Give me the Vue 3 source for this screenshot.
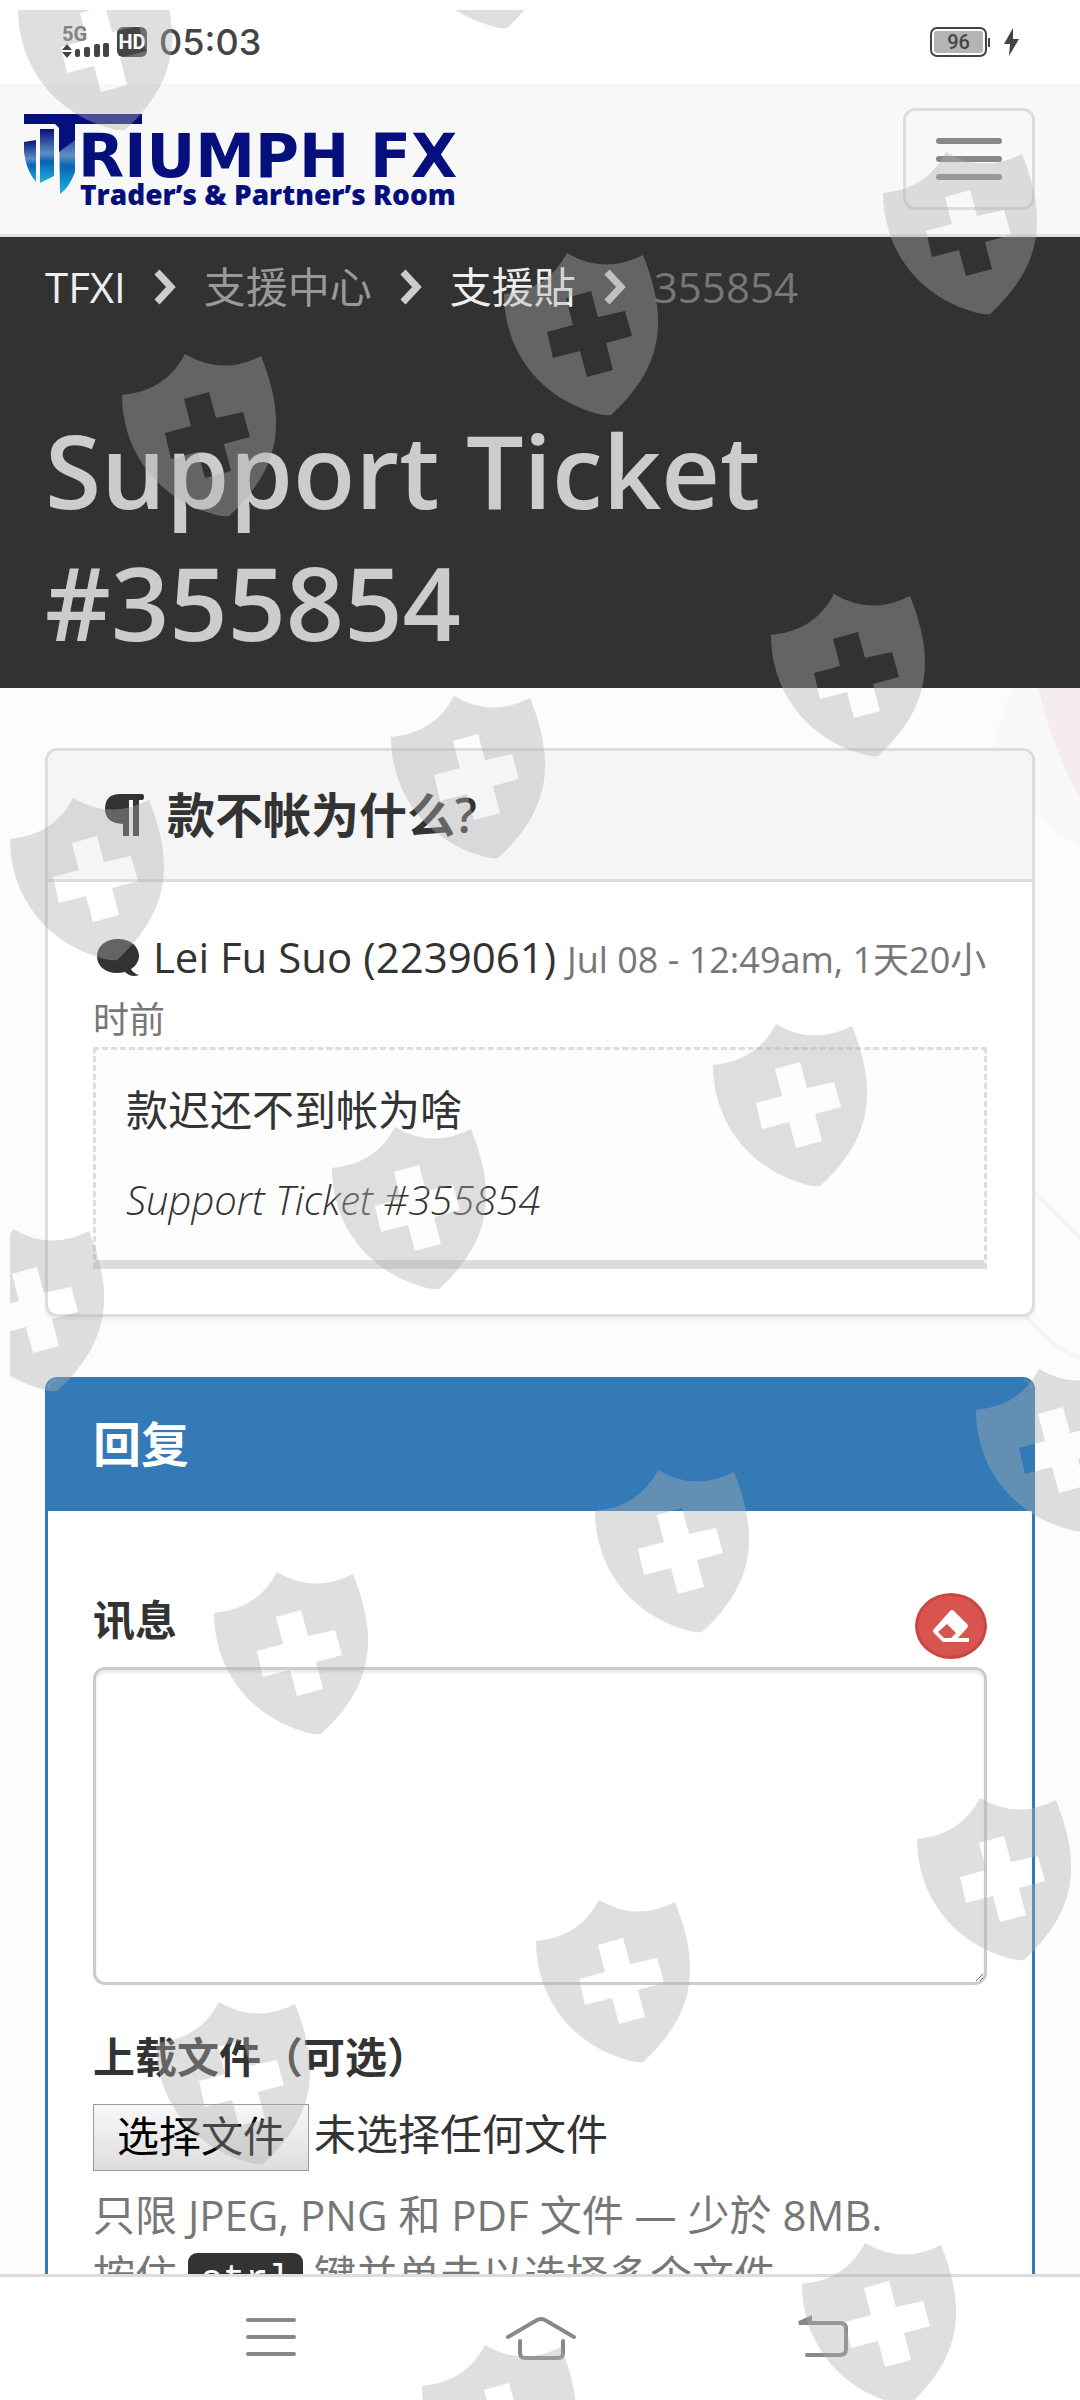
<script setup>
import { ref } from 'vue'

const ticket = {
  id: '355854',
  titulo: '款不帐为什么?',
  autor: 'Lei Fu Suo (2239061)',
  fecha: 'Jul 08 - 12:49am, 1天20小时前',
  mensaje: '款迟还不到帐为啥'
}

const migas = [
  { texto: 'TFXI', tipo: 'link' },
  { texto: '支援中心', tipo: 'muted' },
  { texto: '支援貼', tipo: 'link' },
  { texto: ticket.id, tipo: 'active' }
]

const escudos = [
  [400, -134], [18, -32],
  [883, 152], [504, 253], [122, 354],
  [771, 594], [391, 696], [10, 798],
  [713, 1024], [332, 1127], [-50, 1229],
  [976, 1369], [595, 1470], [214, 1572],
  [917, 1798], [536, 1900], [156, 2002],
  [802, 2243], [422, 2345]
]

const mensaje = ref('')
const archivos = ref([])
const inputArchivo = ref(null)

const limpiar = () => {
  mensaje.value = ''
}

const elegirArchivo = () => {
  inputArchivo.value.click()
}

const cambiarArchivo = (e) => {
  archivos.value = Array.from(e.target.files)
}
</script>

<template>
  <div class="phone">
    <div class="status-bar">
      <div class="status-left">
        <span class="signal">
          <span class="net">5G</span>
          <svg width="48" height="16" viewBox="0 0 48 16" fill="#444">
            <path d="M0 7 L5 1 L10 7z M0 9 L5 15 L10 9z" />
            <rect x="13" y="6" width="5" height="8" rx="2" />
            <rect x="22" y="4" width="6" height="10" rx="2" />
            <rect x="32" y="1" width="6" height="13" rx="2" />
            <rect x="41" y="0" width="6" height="14" rx="2" />
          </svg>
        </span>
        <span class="hd">HD</span>
        <span class="time">05:03</span>
      </div>
      <div class="status-right">
        <span class="battery"><span class="level">96</span></span>
        <svg width="16" height="28" viewBox="0 0 16 28" fill="#444">
          <path d="M9 0 L0 16 H6 L5 28 L15 11 H9z" />
        </svg>
      </div>
    </div>

    <nav class="navbar">
      <a class="brand" href="#" aria-label="Triumph FX">
        <svg class="brand-icon" width="120" height="82" viewBox="0 0 120 82">
          <defs>
            <linearGradient id="barra" x1="0" y1="0" x2="0" y2="1">
              <stop offset="0" stop-color="#06107c" />
              <stop offset="0.45" stop-color="#5d8ec4" />
              <stop offset="0.6" stop-color="#0a62b4" />
              <stop offset="1" stop-color="#1cb4e0" />
            </linearGradient>
          </defs>
          <path d="M0 28 L12 26 V68 Q2 56 0 38z" fill="url(#barra)" />
          <path d="M16 15 H30 V62 L16 69z" fill="url(#barra)" />
          <path d="M35 10 H51 V58 Q45 74 36 80z" fill="url(#barra)" />
          <path d="M0 0 H118 V10 H51 V26 L35 38 V14 L31 10 H0z" fill="#06107c" />
        </svg>
        <span class="brand-text">
          <span class="brand-name">RIUMPH FX</span>
          <span class="brand-sub">Trader’s &amp; Partner’s Room</span>
        </span>
      </a>
      <button class="toggle" type="button" aria-label="Menu">
        <span></span>
        <span></span>
        <span></span>
      </button>
    </nav>

    <main class="page">
      <header class="hero">
        <ol class="breadcrumb">
          <li v-for="(miga, i) in migas" :key="miga.texto">
            <svg v-if="i > 0" width="24" height="38" viewBox="0 0 24 38">
              <path d="M4 4 L18 19 L4 34" fill="none" stroke="#ccc" stroke-width="7" />
            </svg>
            <a v-if="miga.tipo === 'link'" href="#">{{ miga.texto }}</a>
            <span v-else :class="miga.tipo">{{ miga.texto }}</span>
          </li>
        </ol>
        <h1>Support Ticket #{{ ticket.id }}</h1>
      </header>

      <div class="content">
        <svg class="backdrop" viewBox="0 0 100 1700" width="100" height="1700" aria-hidden="true">
          <path d="M32 0 H60 L100 110 V160 L45 120 L12 60z" fill="#f8f8f8" />
          <path d="M58 0 H100 V110 Q76 70 58 0z" fill="#f5eced" />
          <path d="M50 500 L100 550 M40 620 Q70 660 100 670" stroke="#faf3f3" stroke-width="4" fill="none" />
        </svg>

        <section class="panel">
          <div class="panel-heading">
            <svg class="pilcrow" width="40" height="43" viewBox="0 0 40 43" fill="#333">
              <path d="M15 0 H37 Q39 0 39 3 Q39 6 37 6 H34 V42 H28 V6 H24 V42 H18 V30 Q0 29 0 15 Q0 0 15 0z" />
            </svg>
            <h3>{{ ticket.titulo }}</h3>
          </div>
          <div class="panel-body">
            <p class="author">
              <svg width="42" height="38" viewBox="0 0 42 38" fill="#333">
                <path d="M21 0 C33 0 42 7 42 17 C42 22 39 27 34 30 Q36 34 42 36 Q34 39 28 33 C12 37 0 29 0 17 C0 7 9 0 21 0z" />
              </svg>
              {{ ticket.autor }} <small>{{ ticket.fecha }}</small>
            </p>
            <blockquote class="message">
              <p>{{ ticket.mensaje }}</p>
              <p class="firma">Support Ticket #{{ ticket.id }}</p>
            </blockquote>
          </div>
        </section>

        <section class="panel panel-primary">
          <div class="panel-heading">
            <h3>回复</h3>
          </div>
          <form class="panel-body" @submit.prevent>
            <div class="label-row">
              <label for="mensaje">讯息</label>
              <button class="clear" type="button" aria-label="清除" @click="limpiar">
                <svg width="38" height="34" viewBox="0 0 38 34">
                  <path d="M22 2 L35 15 Q37 17 35 19 L26 29 H37 V33 H11 L2 24 Q0 22 2 20 L18 2 Q20 0 22 2z M15 15 L6 23 L12 29 H19 L24 24z" fill="#fff" fill-rule="evenodd" />
                </svg>
              </button>
            </div>
            <textarea id="mensaje" v-model="mensaje"></textarea>

            <label class="file-label" for="archivo">上载文件（可选）</label>
            <div class="file-row">
              <input
                id="archivo"
                ref="inputArchivo"
                class="file-input"
                type="file"
                accept=".jpg,.png,.pdf"
                multiple
                @change="cambiarArchivo"
              />
              <button type="button" class="file-button" @click="elegirArchivo">选择文件</button>
              <span v-if="archivos.length">{{ archivos.map((a) => a.name).join(', ') }}</span>
              <span v-else>未选择任何文件</span>
            </div>
            <p class="help">
              只限 JPEG, PNG 和 PDF 文件 — 少於 8MB.<br />
              按住 <kbd>ctrl</kbd> 键并单击以选择多个文件
            </p>
          </form>
        </section>
      </div>
    </main>

    <div class="nav-bottom">
      <button type="button" aria-label="Recientes">
        <svg width="80" height="60" viewBox="0 0 80 60">
          <path d="M18 13 H64 M18 30 H64 M18 47 H64" />
        </svg>
      </button>
      <button type="button" aria-label="Inicio">
        <svg width="80" height="60" viewBox="0 0 80 60">
          <path d="M8 30 L37 13 Q41 11 45 13 L74 30 M20 34 V46 Q20 51 25 51 H58 Q63 51 63 46 V34" />
        </svg>
      </button>
      <button type="button" aria-label="Atrás">
        <svg width="80" height="60" viewBox="0 0 80 60">
          <path d="M32 16 H70 Q76 16 76 22 V42 Q76 48 70 48 H37" />
          <path d="M29 16 L40 11 V16z" fill="#888" />
        </svg>
      </button>
    </div>

    <svg class="shields" aria-hidden="true">
      <defs>
        <path
          id="escudo"
          fill-rule="evenodd"
          d="M0 41 Q44 37 63 0 Q100 22 139 2 C162 60 164 110 107 162 Q100 163 88 159 C35 143 0 97 0 41z
             M62 45 L87 38 L94 64 L121 58 L128 83 L102 90 L109 117 L83 124 L76 98 L49 105 L43 79 L69 72z"
        />
      </defs>
      <use v-for="(e, i) in escudos" :key="i" href="#escudo" :x="e[0] - 10" :y="e[1] - 10" />
    </svg>
  </div>
</template>

<style>
body {
  margin: 0;
}
</style>

<style scoped>
.phone {
  position: relative;
  display: flex;
  flex-direction: column;
  height: 100vh;
  overflow: hidden;
  background: #fff;
  color: #333;
  font-family: "Open Sans", "Noto Sans CJK SC", sans-serif;
  font-size: 42px;
  line-height: 60px;
}

.phone * {
  box-sizing: border-box;
}

.shields {
  position: absolute;
  top: 10px;
  left: 10px;
  width: calc(100% - 10px);
  height: calc(100% - 10px);
  overflow: hidden;
  pointer-events: none;
  fill: rgba(176, 176, 176, 0.4);
}

/* status bar */
.status-bar {
  flex: none;
  display: flex;
  justify-content: space-between;
  align-items: center;
  height: 84px;
  padding: 0 60px 0 62px;
  color: #444;
  font-family: Roboto, sans-serif;
}

.status-left,
.status-right {
  display: flex;
  align-items: center;
}

.signal {
  display: flex;
  flex-direction: column;
  width: 55px;
}

.net {
  font-size: 20px;
  line-height: 18px;
  font-weight: 700;
  color: #666;
}

.hd {
  width: 30px;
  height: 30px;
  margin-right: 12px;
  border-radius: 6px;
  background: #444;
  color: #fff;
  font-size: 20px;
  line-height: 30px;
  font-weight: 700;
  text-align: center;
}

.time {
  font-family: Inter, sans-serif;
  font-size: 36px;
  font-weight: 500;
}

.battery {
  position: relative;
  width: 57px;
  height: 30px;
  margin-right: 17px;
  padding: 2px;
  border: 2px solid #444;
  border-radius: 7px;
}

.battery::after {
  content: "";
  position: absolute;
  top: 9px;
  right: -5px;
  width: 2px;
  height: 9px;
  background: #444;
}

.level {
  display: block;
  height: 22px;
  border-radius: 3px;
  background: #b4b4b4;
  font-size: 20px;
  line-height: 23px;
  font-weight: 500;
  text-align: center;
}

/* navbar */
.navbar {
  flex: none;
  display: flex;
  justify-content: space-between;
  align-items: flex-start;
  height: 153px;
  padding: 24px 45px 0 24px;
  background: #f8f8f8;
  border-bottom: 3px solid #e0e0e0;
}

.brand {
  display: flex;
  padding-top: 6px;
  color: #06107c;
  text-decoration: none;
}

.brand-icon {
  flex: none;
  margin-right: -66px;
}

.brand-text {
  display: flex;
  flex-direction: column;
  gap: 6px;
  padding-top: 22px;
}

.brand-name {
  font-family: "DejaVu Sans", sans-serif;
  font-size: 60px;
  line-height: 40px;
  font-weight: 700;
}

.brand-sub {
  padding-left: 2px;
  font-size: 28px;
  line-height: 24px;
  font-weight: 800;
}

.toggle {
  display: flex;
  flex-direction: column;
  justify-content: center;
  gap: 12px;
  width: 132px;
  height: 102px;
  padding: 0 30px;
  background: transparent;
  border: 3px solid #ddd;
  border-radius: 12px;
}

.toggle span {
  height: 6px;
  border-radius: 3px;
  background: #888;
}

/* page */
.page {
  flex: 1;
  min-height: 0;
  overflow: hidden;
}

.hero {
  padding: 20px 45px;
  background: #323232;
  color: #ccc;
}

.breadcrumb {
  display: flex;
  margin: 0;
  padding: 0;
  list-style: none;
}

.breadcrumb li {
  display: flex;
  align-items: center;
}

.breadcrumb svg {
  margin: 0 27px;
}

.breadcrumb a {
  color: #eee;
  text-decoration: none;
}

.breadcrumb .muted {
  color: #999;
}

.breadcrumb .active {
  color: #777;
}

.hero h1 {
  margin: 87px 0 0;
  font-size: 102px;
  line-height: 132px;
  font-weight: 600;
}

.content {
  position: relative;
  padding: 60px 45px;
  background: #fcfcfc;
}

.backdrop {
  position: absolute;
  top: 0;
  right: 0;
}

.panel {
  position: relative;
  margin-bottom: 60px;
  background: #fff;
  border: 3px solid #ddd;
  border-radius: 12px;
  box-shadow: 0 3px 3px rgba(0, 0, 0, 0.05);
}

.panel-heading {
  display: flex;
  align-items: center;
  padding: 30px 45px;
  background: #f5f5f5;
  border-bottom: 3px solid #ddd;
  border-radius: 9px 9px 0 0;
}

.panel-heading h3 {
  margin: 0;
  font-size: 48px;
  line-height: 68px;
  font-weight: 600;
}

.pilcrow {
  margin: 0 22px 0 12px;
}

.panel-body {
  padding: 45px;
}

.panel-primary {
  border-color: #337ab7;
}

.panel-primary .panel-heading {
  background: #337ab7;
  border-color: #337ab7;
  color: #fff;
}

.panel-primary .panel-body {
  padding-top: 82px;
}

.author {
  margin: 0;
}

.author svg {
  margin: 0 3px 0 4px;
  vertical-align: -4px;
}

.author small {
  font-size: 36px;
  line-height: 36px;
  color: #777;
}

.message {
  margin: 0;
  padding: 30px;
  border: 3px dashed #ddd;
  border-bottom: 9px solid #ddd;
  background: #fdfdfd;
}

.message p {
  margin: 0;
}

.message .firma {
  margin-top: 30px;
  font-size: 40px;
  font-style: italic;
  font-weight: 300;
}

/* form */
.label-row {
  display: flex;
  justify-content: space-between;
  margin-bottom: 8px;
}

label {
  font-weight: 600;
}

.label-row label {
  line-height: 54px;
}

.clear {
  display: flex;
  align-items: center;
  justify-content: center;
  width: 72px;
  height: 66px;
  padding: 0;
  background: #d9534f;
  border: 3px solid #c94642;
  border-radius: 50%;
}

textarea {
  display: block;
  width: 100%;
  height: 318px;
  padding: 18px 36px;
  background: #fff;
  border: 3px solid #ccc;
  border-radius: 12px;
  box-shadow: inset 0 3px 3px rgba(0, 0, 0, 0.08);
  color: #555;
  font: inherit;
}

.file-label {
  display: block;
  margin-top: 42px;
}

.file-row {
  position: relative;
  display: flex;
  align-items: flex-start;
  gap: 5px;
  margin-top: 17px;
}

.file-input {
  position: absolute;
  width: 1px;
  height: 1px;
  opacity: 0;
}

.file-button {
  width: 216px;
  height: 67px;
  padding: 0 0 4px;
  background: linear-gradient(#f8f8f8, #ddd);
  border: 1px solid #999;
  color: #000;
  font: inherit;
}

.help {
  margin: 14px 0 0;
  color: #777;
}

kbd {
  padding: 6px 12px;
  border-radius: 9px;
  background: #333;
  color: #fff;
  font-family: "Liberation Mono", monospace;
  font-size: 38px;
}

/* bottom navigation */
.nav-bottom {
  flex: none;
  display: flex;
  justify-content: center;
  gap: 190px;
  height: 126px;
  padding-top: 30px;
  background: #fff;
  border-top: 3px solid #ddd;
}

.nav-bottom button {
  height: 60px;
  padding: 0;
  background: none;
  border: none;
}

.nav-bottom svg {
  display: block;
  fill: none;
  stroke: #888;
  stroke-width: 4;
  stroke-linecap: round;
}
</style>
